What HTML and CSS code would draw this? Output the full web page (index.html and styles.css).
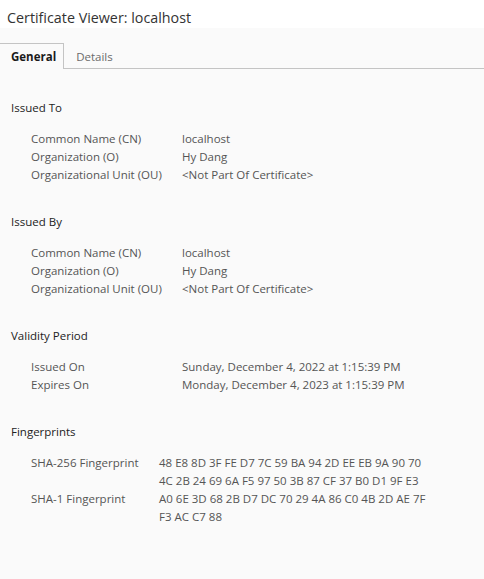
FILE: index.html
```html
<!DOCTYPE html>
<html>
<head>
<meta charset="utf-8">
<link rel="stylesheet" href="styles.css">
</head>
<body>
<div class="title">Certificate Viewer: localhost</div>
<div class="tabs">
  <div class="tab active">General</div>
  <div class="tab">Details</div>
</div>
<div class="content">
  <section class="section">
    <h2 class="heading">Issued To</h2>
    <div class="rows names">
      <div class="label">Common Name (CN)</div><div class="value">localhost</div>
      <div class="label">Organization (O)</div><div class="value">Hy Dang</div>
      <div class="label">Organizational Unit (OU)</div><div class="value">&lt;Not Part Of Certificate&gt;</div>
    </div>
  </section>
  <section class="section">
    <h2 class="heading">Issued By</h2>
    <div class="rows names">
      <div class="label">Common Name (CN)</div><div class="value">localhost</div>
      <div class="label">Organization (O)</div><div class="value">Hy Dang</div>
      <div class="label">Organizational Unit (OU)</div><div class="value">&lt;Not Part Of Certificate&gt;</div>
    </div>
  </section>
  <section class="section">
    <h2 class="heading">Validity Period</h2>
    <div class="rows names">
      <div class="label">Issued On</div><div class="value">Sunday, December 4, 2022 at 1:15:39 PM</div>
      <div class="label">Expires On</div><div class="value">Monday, December 4, 2023 at 1:15:39 PM</div>
    </div>
  </section>
  <section class="section">
    <h2 class="heading">Fingerprints</h2>
    <div class="rows prints">
      <div class="label">SHA-256 Fingerprint</div>
      <div class="value"><span class="line">48 E8 8D 3F FE D7 7C 59 BA 94 2D EE EB 9A 90 70</span><span class="line">4C 2B 24 69 6A F5 97 50 3B 87 CF 37 B0 D1 9F E3</span></div>
      <div class="label">SHA-1 Fingerprint</div>
      <div class="value"><span class="line">A0 6E 3D 68 2B D7 DC 70 29 4A 86 C0 4B 2D AE 7F</span><span class="line">F3 AC C7 88</span></div>
    </div>
  </section>
</div>
</body>
</html>
```

FILE: styles.css
```css
html, body {
  margin: 0;
  padding: 0;
}
body {
  background: #fafafa;
  font-family: "Segoe UI", "Open Sans", "Noto Sans", sans-serif;
  color: #505050;
  width: 484px;
  height: 579px;
  overflow: hidden;
}
.title {
  background: #ffffff;
  height: 28px;
  box-sizing: border-box;
  padding: 8px 0 0 7px;
  font-size: 14.3px;
  line-height: 20px;
  color: #333333;
}
.tabs {
  display: flex;
  margin-top: 15px;
  height: 25px;
  border-bottom: 1px solid #c4c4c4;
}
.tab {
  font-size: 11.5px;
  line-height: 22px;
  padding: 3px 11px 0 12px;
  box-sizing: border-box;
  height: 25px;
  color: #6a6a6a;
}
.tab.active {
  font-weight: bold;
  color: #1a1a1a;
  border: 1px solid #c4c4c4;
  border-left: none;
  border-bottom: none;
  background: #fafafa;
  margin-bottom: -1px;
  height: 26px;
  padding: 2px 7px 0 11px;
}
.content {
  padding: 30px 0 0 11px;
}
.section {
  margin-bottom: 29px;
}
.heading {
  margin: 0 0 13px 0;
  font-size: 11.5px;
  font-weight: normal;
  line-height: 18px;
  color: #222222;
}
.rows {
  display: grid;
  padding-left: 20px;
  font-size: 11.5px;
  line-height: 18px;
}
.rows.names {
  grid-template-columns: 151px 1fr;
}
.rows.prints {
  grid-template-columns: 128px 1fr;
}
.label {
  color: #555555;
}
.value {
  color: #555555;
}
.line {
  display: block;
}
```
